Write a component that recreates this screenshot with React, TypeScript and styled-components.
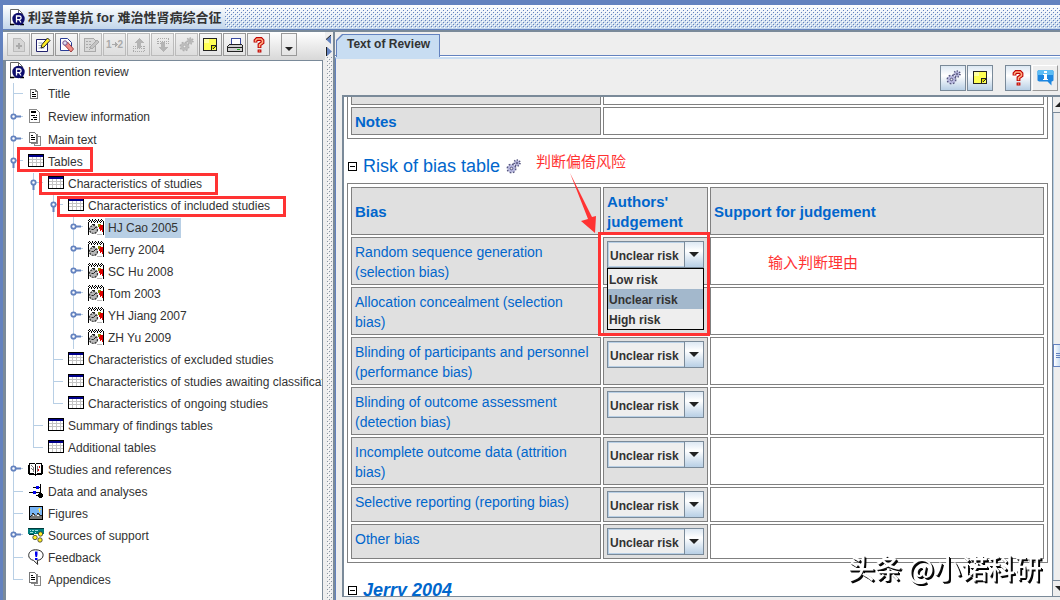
import React from 'react';
import styled, { createGlobalStyle, css } from 'styled-components';

const ui = '"Liberation Sans", "Noto Sans CJK SC", sans-serif';
const cjk = '"Noto Sans CJK SC", "Liberation Sans", sans-serif';
const slate = '#7a8a99';
const frame = '#6382bf';
const link = '#0066cc';
const red = '#ff3333';

const GlobalStyle = createGlobalStyle`
  *, *::before, *::after { box-sizing: border-box; }
  body { margin: 0; background: ${frame}; font-family: ${ui}; font-size: 12px; color: #333; }
  svg { display: block; flex: none; }
`;

const Window = styled.div`
  display: flex;
  flex-direction: column;
  height: 100vh;
  padding: 5px 0 0 3px;
  overflow: hidden;
`;

const TitleBar = styled.header`
  display: flex;
  align-items: center;
  gap: 3px;
  flex: none;
  height: 27px;
  padding: 0 0 0 7px;
  background: linear-gradient(#fff, #c0d4ea);
  border-bottom: 2px solid ${slate};
  box-shadow: inset 0 -1px ${frame};
`;

const WindowTitle = styled.h1`
  margin: 0;
  font: bold 13px/20px ${ui};
  white-space: nowrap;
`;

const Bumps = styled.div<{ $color: string }>`
  flex: 1;
  align-self: stretch;
  background-image: conic-gradient(at 1px 1px, transparent 75%, ${p => p.$color} 0),
    conic-gradient(at 1px 1px, transparent 75%, ${p => p.$color} 0),
    conic-gradient(at 1px 1px, transparent 75%, #fff 0),
    conic-gradient(at 1px 1px, transparent 75%, #fff 0);
  background-size: 4px 4px;
  background-position: 0 0, 2px 2px, 1px 1px, 3px 3px;
`;

const TitleBumps = styled(Bumps)`
  margin: 3px 0 2px;
`;

const Body = styled.div`
  display: flex;
  flex: 1;
  min-height: 0;
  background: #eee;
`;

const Outline = styled.aside`
  display: flex;
  flex-direction: column;
  flex: none;
  width: 322px;
`;

const IconBar = styled.div`
  display: flex;
  align-items: flex-start;
  gap: 1px;
  flex: none;
  height: 28px;
  padding: 1px 0 0 4px;
  background: linear-gradient(#fff, #d8d8d8);
`;

const IconButton = styled.button<{ $narrow?: boolean }>`
  display: flex;
  align-items: center;
  justify-content: center;
  width: ${p => (p.$narrow ? 16 : 23)}px;
  height: 23px;
  margin-left: ${p => (p.$narrow ? 10 : 0)}px;
  padding: ${p => (p.$narrow ? 8 : 0)}px 0 0;
  border: 1px solid #999;
  background: linear-gradient(#f6f6f6, #e4e4e4);
  font: bold 10px/12px ${ui};
  color: #aaa;
  &:disabled { border-color: #bbb; background: linear-gradient(#eee, #ddd); color: #aaa; }
`;

const Tree = styled.ul`
  position: relative;
  flex: 1;
  min-height: 0;
  margin: 0 2px 0 0;
  padding: 0;
  overflow: hidden;
  list-style: none;
  background: #fff;
  border: solid ${slate};
  border-width: 1px 1px 0 3px;
`;

const TreeRow = styled.li<{ $tall?: boolean }>`
  display: flex;
  align-items: stretch;
  height: ${p => (p.$tall ? 24 : 22)}px;
  padding-left: 2px;
`;

const NodeIcon = styled.span`
  display: flex;
  align-items: center;
  flex: none;
  width: 20px;
  padding-bottom: 3px;
`;

const NodeLabel = styled.span<{ $selected?: boolean }>`
  align-self: center;
  font-size: 12px;
  line-height: 20px;
  white-space: nowrap;
  ${p => p.$selected && css`
    margin-left: -3px;
    padding: 0 3px;
    background: #b8cfe5;
  `}
`;

const Mark = styled.div<{ $x: number; $y: number; $w: number; $h: number }>`
  position: absolute;
  z-index: 3;
  left: ${p => p.$x}px;
  top: ${p => p.$y}px;
  width: ${p => p.$w}px;
  height: ${p => p.$h}px;
  border: 3px solid ${red};
  pointer-events: none;
`;

const Splitter = styled.div`
  display: flex;
  flex-direction: column;
  align-items: center;
  flex: none;
  width: 10px;
  padding-top: 3px;
  border-right: 2px solid ${slate};
`;

const SplitterBumps = styled(Bumps)`
  flex: 1;
  align-self: center;
  width: 5px;
`;

const Main = styled.main`
  display: flex;
  flex-direction: column;
  flex: 1;
  min-width: 0;
`;

const TabStrip = styled.div`
  display: flex;
  flex: none;
  height: 25px;
  padding: 2px 0 0 1px;
`;

const TabShape = styled.div`
  padding: 1px;
  background: ${frame};
  clip-path: polygon(6px 0, 100% 0, 100% 100%, 0 100%, 0 6px);
`;

const Tab = styled.button`
  height: 23px;
  padding: 0 9px 6px 10px;
  border: 0;
  background: #c8ddf2;
  clip-path: polygon(6px 0, 100% 0, 100% 100%, 0 100%, 0 6px);
  font: bold 12px/16px ${ui};
  color: #333;
  white-space: nowrap;
`;

const TabPage = styled.section`
  display: flex;
  flex-direction: column;
  flex: 1;
  min-height: 0;
  padding: 0 0 3px 6px;
  border-top: 2px solid #c8ddf2;
  border-left: 1px solid ${frame};
  box-shadow: 0 -1px #fff, 0 -2px ${frame};
`;

const Actions = styled.div`
  display: flex;
  align-items: center;
  justify-content: flex-end;
  gap: 1px;
  flex: none;
  height: 36px;
  padding: 1px 2px 0 0;
`;

const ActionButton = styled.button<{ $spaced?: boolean; $raised?: boolean }>`
  display: flex;
  align-items: center;
  justify-content: center;
  width: 26px;
  height: 26px;
  padding: 0;
  margin-left: ${p => (p.$spaced ? 11 : 0)}px;
  border: 1px solid ${slate};
  background: linear-gradient(#dde8f3, #fff 40%, #b8cfe5);
  ${p => p.$raised && css`
    border-color: #fff #999 #999 #fff;
    background: #eee;
  `}
`;

const Viewer = styled.div`
  display: flex;
  flex: 1;
  min-height: 0;
  overflow: hidden;
  border: solid ${slate};
  border-width: 2px 0 1px 2px;
  background: #fff;
`;

const Page = styled.div`
  flex: 1;
  min-width: 0;
  height: 0;
  margin-top: -24px;
  padding: 0 4px 0 3px;
`;

const DataTable = styled.table`
  width: 100%;
  padding: 1px;
  table-layout: fixed;
  border: 1px solid #808080;
  border-spacing: 2px;
  color: ${link};
  font-size: 15px;
  line-height: 20px;
  text-align: left;
  th, td { height: 28px; padding: 3px; border: 1px solid #808080; vertical-align: top; }
  th { padding: 4px 7px 2px 3px; }
  thead th { background: #e0e0e0; vertical-align: middle; }
`;

const NameCell = styled.th<{ $strong?: boolean }>`
  background: #e0e0e0;
  font-size: ${p => (p.$strong ? 15 : 14)}px;
  font-weight: ${p => (p.$strong ? 'bold' : 'normal')};
`;

const ChoiceCell = styled.td`
  background: #e0e0e0;
`;

const SectionTitle = styled.h2<{ $study?: boolean }>`
  display: flex;
  align-items: center;
  gap: 6px;
  margin: 0;
  padding: 15px 0 5px 1px;
  color: ${link};
  font: ${p => (p.$study ? 'italic bold' : 'normal')} 18px/24px ${ui};
  white-space: nowrap;
`;

const Collapse = styled.button`
  display: flex;
  align-items: center;
  justify-content: center;
  width: 9px;
  height: 9px;
  padding: 0;
  border: 1px solid #000;
  background: #fff;
  &::before { content: ''; width: 5px; height: 1px; background: #000; }
`;

const Combo = styled.div`
  position: relative;
  display: grid;
  grid-template-columns: 1fr 20px;
  height: 27px;
  line-height: 16px;
`;

const ComboField = styled.select`
  grid-area: 1 / 1 / 2 / 3;
  appearance: none;
  min-width: 0;
  margin: 0;
  padding: 2px 0 0 2px;
  border: 1px solid ${slate};
  border-radius: 0;
  outline: 1px solid #b8cfe5;
  outline-offset: -2px;
  background: #eee;
  color: #333;
  font: bold 12px/16px ${ui};
`;

const ComboArrow = styled.span`
  grid-area: 1 / 2;
  z-index: 1;
  display: flex;
  align-items: center;
  justify-content: center;
  border: 1px solid ${slate};
  background: linear-gradient(#dde8f3, #fff 35%, #b8cfe5);
  pointer-events: none;
`;

const Popup = styled.ul`
  position: absolute;
  z-index: 2;
  top: 100%;
  left: 0;
  right: 0;
  margin: 0;
  padding: 0;
  list-style: none;
  border: 1px solid #000;
  background: #eee;
  color: #333;
`;

const Option = styled.li<{ $active?: boolean }>`
  height: 20px;
  padding: 3px 1px 0;
  font: bold 12px/17px ${ui};
  background: ${p => (p.$active ? '#a3b8cc' : 'transparent')};
`;

const RiskSection = styled.div`
  position: relative;
`;

const Note = styled.span<{ $x: number; $y: number }>`
  position: absolute;
  left: ${p => p.$x}px;
  top: ${p => p.$y}px;
  color: ${red};
  font: 15px/20px ${cjk};
  white-space: nowrap;
`;

const Pointer = styled.svg`
  position: absolute;
  left: 220px;
  top: 30px;
  pointer-events: none;
`;

const ScrollBar = styled.div`
  display: flex;
  flex-direction: column;
  flex: none;
  width: 8px;
  overflow: hidden;
  border-left: 1px solid ${slate};
  box-shadow: inset 1px 0 #b8cfe5;
  background: #eee;
`;

const ScrollStep = styled.span<{ $end?: boolean }>`
  display: flex;
  align-items: center;
  height: 16px;
  padding-left: 2px;
  border: solid ${slate};
  border-width: ${p => (p.$end ? '1px 0 0' : '0 0 1px')};
  background: #eee;
`;

const Thumb = styled.span`
  display: flex;
  align-items: center;
  height: 23px;
  padding-left: 2px;
  border: 1px solid ${frame};
  border-right: 0;
  background: linear-gradient(90deg, #fff, #c8ddf2);
`;

const ScrollGap = styled.span<{ $grow: number }>`
  flex: ${p => p.$grow} 0 0;
`;

const Watermark = styled.div`
  position: fixed;
  right: 18px;
  bottom: 14px;
  color: #fff;
  font: 500 27px/36px ${cjk};
  text-shadow: 1px 1px 0 #111, 2px 2px 0 #000;
  white-space: nowrap;
  pointer-events: none;
`;

/* ---------- icons ---------- */

const Pix = ({ w = 16, h = 16, children }: { w?: number; h?: number; children: React.ReactNode }) => (
  <svg width={w} height={h} viewBox={`0 0 ${w} ${h}`} shapeRendering="crispEdges" fill="none" aria-hidden="true">
    {children}
  </svg>
);

const LogoIcon = ({ pad = 0 }: { pad?: number }) => (
  <svg width={15 + pad} height="17" viewBox={`${-pad} 0 ${15 + pad} 17`} aria-hidden="true">
    <path d="M.5 15.500V.5h8l4 4v11z" fill="#fff" stroke="#666" />
    <path d="M8.500.5v4h4" fill="none" stroke="#666" />
    <path d="M0 15.500h4M10 15.500h4" stroke="#000" strokeWidth="1.500" />
    <circle cx="8.500" cy="10" r="6.200" fill="#0b0b6b" />
    <path d="M6.500 13.500V7h2.800a1.800 1.800 0 0 1 0 3.600H6.500M9 10.500l2 3" fill="none" stroke="#fff" strokeWidth="1.300" />
  </svg>
);

const TitleIcon = () => (
  <Pix>
    <path d="M2.500 4.500h5l2 2v7h-7z" fill="#fff" stroke="#777" />
    <path d="M4 7.500h2M4 9.500h4M4 11.500h4" stroke="#000" />
    <path d="M7 5h1v1h1v1H7z" fill="#777" />
  </Pix>
);

const InfoPageIcon = () => (
  <Pix>
    <path d="M1.500 1.500h7l3 3v10h-10z" fill="#fff" stroke="#888" />
    <path d="M3 3h5v2H3z" fill="#000" />
    <path d="M3 7.500h4M8 7.500h1M5 9.500h4M3 11.500h2M6 11.500h3" stroke="#000" />
  </Pix>
);

const PagesIcon = () => (
  <Pix>
    <path d="M6.500 5.500h6v9h-6z" fill="#fff" stroke="#888" />
    <path d="M3.500 3.500h6v9h-6z" fill="#fff" stroke="#888" />
    <path d="M1.500 1.500h5l2 2v8h-7z" fill="#fff" stroke="#777" />
    <path d="M3 4.500h2M3 6.500h4M3 8.500h4" stroke="#000" />
  </Pix>
);

const TableIcon = () => (
  <Pix h={14}>
    <path d="M.5.5h15v12H.5z" fill="#fff" stroke="#000" />
    <path d="M1 1h14v2H1z" fill="#00008b" />
    <path d="M1 5.500h14M1 8.500h14M4.500 3v9M8.500 3v9M12.500 3v9" stroke="#c4c4c4" />
  </Pix>
);

const StudyIcon = () => (
  <Pix>
    <path d="M0 2h16v14H0z" fill="#fff" />
    <path d="M.5 3v13M15.500 3v13" stroke="#000" />
    <path d="M1 .5h15M0 3.500h15" stroke="#000" strokeDasharray="1 2" />
    <path d="M0 1.500h16M1 2.500h15" stroke="#000" strokeDasharray="1 1" />
    <g shapeRendering="auto">
      <circle cx="5.500" cy="10.500" r="4" fill="#b8b8b8" stroke="#333" strokeWidth="1.200" strokeDasharray="2 1" />
      <path d="M5.500 10.500l2.500-2.500M5.500 10.500H3.500M4 5.500h3" stroke="#222" />
    </g>
    <path d="M10 5h3v3h-3z" fill="#8a8a00" />
    <path d="M12 6h3v7h-1v-2h-1v-1h-1zM11 8h1v2h-1zM12 10h1v2h-1z" fill="#e00000" />
    <path d="M9 15.500h5" stroke="#bbb" />
  </Pix>
);

const BookIcon = () => (
  <Pix>
    <path d="M1.500 2.500h5l1 1 1-1h5v10h-4l-2 2-2-2h-4z" fill="#fff" stroke="#000" />
    <path d="M.5 4v9M14.500 4v9M7.500 3v11M1 13.500h5M9 13.500h5" stroke="#000" />
    <path d="M3 4l2 2v5M3 7l2 2" stroke="#777" />
    <path d="M9.500 5v6" stroke="#777" />
    <path d="M11 5h1v2h-1zM10 8h1v2h-1z" fill="#e00000" />
  </Pix>
);

const DataIcon = () => (
  <Pix>
    <path d="M12.500 1v12M5 4.500h8M1 9.500h11" stroke="#000" />
    <path d="M8 3h3v3H8zM5 8h3v3H5z" fill="#0000ee" />
    <path d="M11 10h3v1h1v3h-1v1h-3v-1h-1v-1H8v-1h2v-1h1z" fill="#000" />
  </Pix>
);

const FigureIcon = () => (
  <Pix>
    <path d="M1.500 1.500h13v13h-13z" fill="#7ab6f5" stroke="#000" />
    <path d="M2 12l3-4 3 3 2-3 4 4v2H2z" fill="#777" />
    <path d="M2 11.500h1M3 10.500h1M4 8.500h2M6 9.500h1M9 8.500h2M11 9.500h1M12 10.500h2" stroke="#222" />
    <path d="M4 11h2v-1H5zM9 11h2v-1H9z" fill="#fff" />
    <path d="M11.500 3v4M10 4.500h3" stroke="#ffe04a" />
  </Pix>
);

const SupportIcon = () => (
  <Pix>
    <path d="M0 1h16v6H0z" fill="#007d7d" />
    <path d="M0 1.500h16M1 7.500h5" stroke="#003c3c" />
    <path d="M2 3.500h1M4 3.500h2M7 3.500h3M2 5.500h3M7 5.500h1" stroke="#9fe0e0" />
    <g shapeRendering="auto" fill="#ffee22" stroke="#333" strokeWidth=".8">
      <circle cx="12.500" cy="7" r="2.200" />
      <circle cx="7" cy="10.500" r="2.200" />
      <circle cx="12" cy="13" r="2.200" />
    </g>
  </Pix>
);

const FeedbackIcon = () => (
  <svg width="16" height="16" viewBox="0 0 16 16" aria-hidden="true">
    <path d="M7.500.8C3 .8.7 3.400.7 6.400c0 2.600 2 4.400 4.800 5l4.200 4-.4-4c3.400-.4 5.800-2.400 5.800-5.200 0-3-2.600-5.400-7.600-5.400z" fill="#fff" stroke="#222" />
    <path d="M7 2.500h2.500v3L9 8H7.500L7 5.500zM7 9h2.500v2H7z" fill="#0000ee" />
  </svg>
);

const NoteIcon = () => (
  <Pix w={15} h={14}>
    <path d="M.5.5h13v12H.5z" fill="#ffff55" stroke="#222" />
    <path d="M1 1h5v4H1z" fill="#ffffa0" />
    <path d="M8.500 12V7.500H13" fill="#dcdc00" stroke="#222" />
    <path d="M9.500 11.500l3-3" stroke="#222" />
  </Pix>
);

const HelpIcon = () => (
  <svg width="12" height="16" viewBox="0 0 12 16" fill="none" aria-hidden="true">
    <path d="M2.500 5.500V3.500L4 2h4l1.500 1.500v2L6.500 7.800V11M6.500 12.600v2.800" stroke="#c00000" strokeWidth="3.800" />
    <path d="M2.500 4.800V3.500L4 2h4l1.500 1.500v2L6.500 7.800v2.500M6.500 13.400v1.200" stroke="#ffb084" strokeWidth="1.600" />
  </svg>
);

const GearsIcon = ({ grey }: { grey?: boolean }) => {
  const line = grey ? '#b0b0b0' : '#55557f';
  const fill = grey ? '#bdbdbd' : '#b9b9df';
  return (
    <svg width="15" height="15" viewBox="0 0 15 15" aria-hidden="true">
      <circle cx="5.500" cy="9.500" r="4" fill={fill} stroke={line} strokeWidth="2" strokeDasharray="1.600 1.540" />
      <circle cx="5.500" cy="9.500" r="3.500" fill={fill} />
      <circle cx="5.500" cy="9.500" r="1.300" fill="#eee" stroke={line} />
      <circle cx="11" cy="4" r="2.800" fill={fill} stroke={line} strokeWidth="2" strokeDasharray="1.200 1.310" />
      <circle cx="11" cy="4" r="2.200" fill={fill} />
      <circle cx="11" cy="4" r=".8" fill="#eee" stroke={line} />
    </svg>
  );
};

const BubbleIcon = () => (
  <svg width="17" height="17" viewBox="0 0 17 17" aria-hidden="true">
    <path d="M2 1h13l1.500 1v9.500l-1.500 1h-.5v4l-4-4H2l-1.500-1V2z" fill="#1c86e0" />
    <path d="M2 1h13l1.500 1v4H.5V2z" fill="#5cbcf4" />
    <path d="M7 2h3v2H7zM6 5h4v5h1v1H6v-1h1V6H6z" fill="#fff" />
  </svg>
);

const NewPageIcon = () => (
  <Pix>
    <path d="M2.500 1.500h7l4 4v9h-11z" fill="#d6d6d6" stroke="#bbb" />
    <path d="M5 9h6M8 6v6" stroke="#aaa" strokeWidth="2" />
  </Pix>
);

const EditPageIcon = () => (
  <svg width="16" height="16" viewBox="0 0 16 16" aria-hidden="true">
    <path d="M1.500 2.500h11v12h-11z" fill="#fff" stroke="#23236e" />
    <path d="M3.500 6h4M3.500 8.500h3M3.500 11h6" stroke="#9ab" />
    <path d="M6 11l1-3.500L12.500 1l2.500 2.500L9 10z" fill="#ffee22" stroke="#222" />
  </svg>
);

const ErasePageIcon = () => (
  <svg width="16" height="16" viewBox="0 0 16 16" aria-hidden="true">
    <path d="M1.500 1.500h7l4 4v8h-11z" fill="#fff" stroke="#2a3c96" />
    <path d="M5.500 8l3-3 6 7-2.500 3z" fill="#f08c86" stroke="#a04040" />
    <circle cx="6" cy="6" r="2.200" fill="#dde" stroke="#77508a" />
  </svg>
);

const ReviewPageIcon = () => (
  <Pix>
    <path d="M1.500 1.500h9l2 2v11h-11z" fill="#d8d8d8" stroke="#aaa" />
    <path d="M3 4.500h6M3 7.500h5M3 10.500h4" stroke="#aaa" strokeDasharray="2 1" />
    <path d="M7 12l1-3 6-6 2 2-6 6z" fill="#c4c4c4" stroke="#aaa" />
  </Pix>
);

const SmallArrow = () => (
  <Pix w={6} h={5}>
    <path d="M0 2.500h5M3.500 1v3" stroke="#aaa" />
    <path d="M3 0h1v1h1v1h1v1H5v1H4v1H3z" fill="#aaa" />
  </Pix>
);

const MoveIcon = ({ down }: { down?: boolean }) => (
  <Pix>
    <g transform={down ? 'rotate(180 8 8)' : undefined}>
      <path d="M8 1l5 5h-3v5H6V6H3z" fill="#b4b4b4" />
      <path d="M2 9.500h4M10 9.500h4M2 11.500h12M2 14.500h12" stroke="#aaa" strokeDasharray="1 1" />
      <path d="M2.500 9v6M13.500 9v6" stroke="#aaa" strokeDasharray="1 1" />
    </g>
  </Pix>
);

const PrinterIcon = () => (
  <Pix>
    <path d="M4.500 7.500v-6h9v6" fill="#fff" stroke="#3a4aa0" />
    <path d="M2.500 7.500h12l1 1v6H.5v-5z" fill="#d0d0d0" stroke="#222" />
    <path d="M1 10.500h14" stroke="#222" />
    <path d="M10 12h3v1h-3z" fill="#20b020" />
  </Pix>
);

const Triangle = ({ w = 10 }: { w?: number }) => (
  <svg width={w} height={w / 2} viewBox="0 0 10 5" aria-hidden="true"><path d="M0 0h10L5 5z" fill="#222" /></svg>
);

/* ---------- tree ---------- */

type Joint = 'pass' | 'leaf' | 'end' | 'closed' | 'open';

const guideLine = '#b8cfe5';
const Guide = ({ joint, tall }: { joint: Joint; tall?: boolean }) => {
  const h = tall ? 24 : 22;
  const mid = h - 13;
  return (
    <Pix w={20} h={h}>
      <path d={`M5.500 0V${joint === 'end' ? mid + 2 : h}`} stroke={guideLine} />
      {(joint === 'leaf' || joint === 'end') && <path d={`M5 ${mid + 1.5}h10`} stroke={guideLine} />}
      {(joint === 'closed' || joint === 'open') && (
        <g shapeRendering="auto">
          <path d={joint === 'closed' ? `M8 ${mid + 0.5}h5` : `M5.500 ${mid + 3}v5`} stroke={frame} strokeWidth="2" />
          <path d={joint === 'closed' ? `M13 ${mid + 0.5}h2` : `M8 ${mid + 0.5}h7`} stroke={guideLine} />
          <circle cx="5.500" cy={mid + 0.5} r="2.200" fill="#fff" stroke={frame} strokeWidth="1.800" />
        </g>
      )}
    </Pix>
  );
};

type Node = { label: string; icon: React.ReactNode; guides: Joint[]; tall?: boolean; selected?: boolean };

const studies = ['HJ Cao 2005', 'Jerry 2004', 'SC Hu 2008', 'Tom 2003', 'YH Jiang 2007', 'ZH Yu 2009'];

const nodes: Node[] = [
  { label: 'Intervention review', icon: <LogoIcon pad={2} />, guides: [] },
  { label: 'Title', icon: <TitleIcon />, guides: ['leaf'] },
  { label: 'Review information', icon: <InfoPageIcon />, guides: ['closed'], tall: true },
  { label: 'Main text', icon: <PagesIcon />, guides: ['closed'] },
  { label: 'Tables', icon: <TableIcon />, guides: ['open'] },
  { label: 'Characteristics of studies', icon: <TableIcon />, guides: ['pass', 'open'] },
  { label: 'Characteristics of included studies', icon: <TableIcon />, guides: ['pass', 'pass', 'open'] },
  ...studies.map((label, i): Node => ({
    label,
    icon: <StudyIcon />,
    guides: ['pass', 'pass', 'pass', 'closed'],
    selected: i === 0,
  })),
  { label: 'Characteristics of excluded studies', icon: <TableIcon />, guides: ['pass', 'pass', 'leaf'] },
  { label: 'Characteristics of studies awaiting classification', icon: <TableIcon />, guides: ['pass', 'pass', 'leaf'] },
  { label: 'Characteristics of ongoing studies', icon: <TableIcon />, guides: ['pass', 'pass', 'end'] },
  { label: 'Summary of findings tables', icon: <TableIcon />, guides: ['pass', 'leaf'] },
  { label: 'Additional tables', icon: <TableIcon />, guides: ['pass', 'end'] },
  { label: 'Studies and references', icon: <BookIcon />, guides: ['closed'] },
  { label: 'Data and analyses', icon: <DataIcon />, guides: ['leaf'] },
  { label: 'Figures', icon: <FigureIcon />, guides: ['leaf'] },
  { label: 'Sources of support', icon: <SupportIcon />, guides: ['closed'] },
  { label: 'Feedback', icon: <FeedbackIcon />, guides: ['leaf'] },
  { label: 'Appendices', icon: <PagesIcon />, guides: ['end'] },
];

const tools: { name: string; icon: React.ReactNode; disabled?: boolean }[] = [
  { name: 'New', icon: <NewPageIcon />, disabled: true },
  { name: 'Edit', icon: <EditPageIcon /> },
  { name: 'Delete', icon: <ErasePageIcon /> },
  { name: 'Rename', icon: <ReviewPageIcon />, disabled: true },
  { name: 'Renumber', icon: <>1<SmallArrow />2</>, disabled: true },
  { name: 'Move up', icon: <MoveIcon />, disabled: true },
  { name: 'Move down', icon: <MoveIcon down />, disabled: true },
  { name: 'Properties', icon: <GearsIcon grey />, disabled: true },
  { name: 'Notes', icon: <NoteIcon /> },
  { name: 'Print', icon: <PrinterIcon /> },
  { name: 'Help', icon: <HelpIcon /> },
];

const domains = [
  'Random sequence generation (selection bias)',
  'Allocation concealment (selection bias)',
  'Blinding of participants and personnel (performance bias)',
  'Blinding of outcome assessment (detection bias)',
  'Incomplete outcome data (attrition bias)',
  'Selective reporting (reporting bias)',
  'Other bias',
];

const levels = ['Low risk', 'Unclear risk', 'High risk'];

const RiskCombo = ({ label, open }: { label: string; open?: boolean }) => (
  <Combo>
    <ComboField aria-label={label} defaultValue="Unclear risk">
      {levels.map(l => <option key={l}>{l}</option>)}
    </ComboField>
    <ComboArrow><Triangle /></ComboArrow>
    {open && (
      <Popup role="listbox">
        {levels.map(l => (
          <Option key={l} role="option" aria-selected={l === 'Unclear risk'} $active={l === 'Unclear risk'}>{l}</Option>
        ))}
      </Popup>
    )}
  </Combo>
);

export default function App() {
  return (
    <Window>
      <GlobalStyle />
      <TitleBar>
        <LogoIcon />
        <WindowTitle>利妥昔单抗 for 难治性肾病综合征</WindowTitle>
        <TitleBumps $color={frame} />
      </TitleBar>
      <Body>
        <Outline>
          <IconBar>
            {tools.map(t => (
              <IconButton key={t.name} aria-label={t.name} disabled={t.disabled}>{t.icon}</IconButton>
            ))}
            <IconButton aria-label="More" $narrow><Triangle w={8} /></IconButton>
          </IconBar>
          <Tree role="tree">
            {nodes.map(n => (
              <TreeRow key={n.label} role="treeitem" $tall={n.tall}>
                {n.guides.map((g, i) => <Guide key={i} joint={g} tall={n.tall} />)}
                <NodeIcon>{n.icon}</NodeIcon>
                <NodeLabel $selected={n.selected}>{n.label}</NodeLabel>
              </TreeRow>
            ))}
            <Mark as="li" role="presentation" $x={11} $y={86} $w={76} $h={25} />
            <Mark as="li" role="presentation" $x={33} $y={112} $w={179} $h={22} />
            <Mark as="li" role="presentation" $x={51} $y={135} $w={229} $h={21} />
          </Tree>
        </Outline>
        <Splitter>
          <svg width="6" height="22" viewBox="0 0 6 22" aria-hidden="true">
            <path d="M5 0v9L0 4.500z" fill={frame} />
            <path d="M5 0L0 4.500" stroke="#222" />
            <path d="M1 12v9l5-4.500z" fill={frame} />
            <path d="M.5 12v9" stroke="#222" />
          </svg>
          <SplitterBumps $color="#8a96a3" />
        </Splitter>
        <Main>
          <TabStrip role="tablist">
            <TabShape><Tab role="tab" aria-selected="true">Text of Review</Tab></TabShape>
          </TabStrip>
          <TabPage>
            <Actions>
              <ActionButton aria-label="Properties"><GearsIcon /></ActionButton>
              <ActionButton aria-label="Notes"><NoteIcon /></ActionButton>
              <ActionButton aria-label="Help" $spaced><HelpIcon /></ActionButton>
              <ActionButton aria-label="Information" $raised><BubbleIcon /></ActionButton>
            </Actions>
            <Viewer>
              <Page>
                <DataTable>
                  <colgroup><col style={{ width: 250 }} /><col /></colgroup>
                  <tbody>
                    <tr><NameCell scope="row" /><td /></tr>
                    <tr><NameCell scope="row" $strong>Notes</NameCell><td /></tr>
                  </tbody>
                </DataTable>
                <RiskSection>
                  <SectionTitle>
                    <Collapse aria-label="Collapse risk of bias table" />
                    Risk of bias table
                    <GearsIcon />
                  </SectionTitle>
                  <DataTable>
                    <colgroup><col style={{ width: 250 }} /><col style={{ width: 105 }} /><col /></colgroup>
                    <thead>
                      <tr><th>Bias</th><th>Authors' judgement</th><th>Support for judgement</th></tr>
                    </thead>
                    <tbody>
                      {domains.map((d, i) => (
                        <tr key={d}>
                          <NameCell scope="row">{d}</NameCell>
                          <ChoiceCell><RiskCombo label={d} open={i === 0} /></ChoiceCell>
                          <td />
                        </tr>
                      ))}
                    </tbody>
                  </DataTable>
                  <Note $x={189} $y={12}>判断偏倚风险</Note>
                  <Note $x={421} $y={113}>输入判断理由</Note>
                  <Pointer width="36" height="68" viewBox="0 0 36 68">
                    <path d="M3 4l18 46-7 2 14 12 1-17-4 1z" fill={red} />
                  </Pointer>
                  <Mark $x={251} $y={93} $w={112} $h={104} />
                </RiskSection>
                <SectionTitle $study>
                  <Collapse aria-label="Collapse Jerry 2004" />
                  Jerry 2004
                </SectionTitle>
              </Page>
              <ScrollBar aria-hidden="true">
                <ScrollStep>
                  <svg width="10" height="5" viewBox="0 0 10 5"><path d="M0 5h10L5 0z" fill="#222" /></svg>
                </ScrollStep>
                <ScrollGap $grow={231} />
                <Thumb>
                  <svg width="10" height="6" viewBox="0 0 10 6"><path d="M0 .5h10M0 2.500h10M0 4.500h10" stroke={frame} /></svg>
                </Thumb>
                <ScrollGap $grow={213} />
                <ScrollStep $end><Triangle /></ScrollStep>
              </ScrollBar>
            </Viewer>
          </TabPage>
        </Main>
      </Body>
      <Watermark>头条 @小诺科研</Watermark>
    </Window>
  );
}
